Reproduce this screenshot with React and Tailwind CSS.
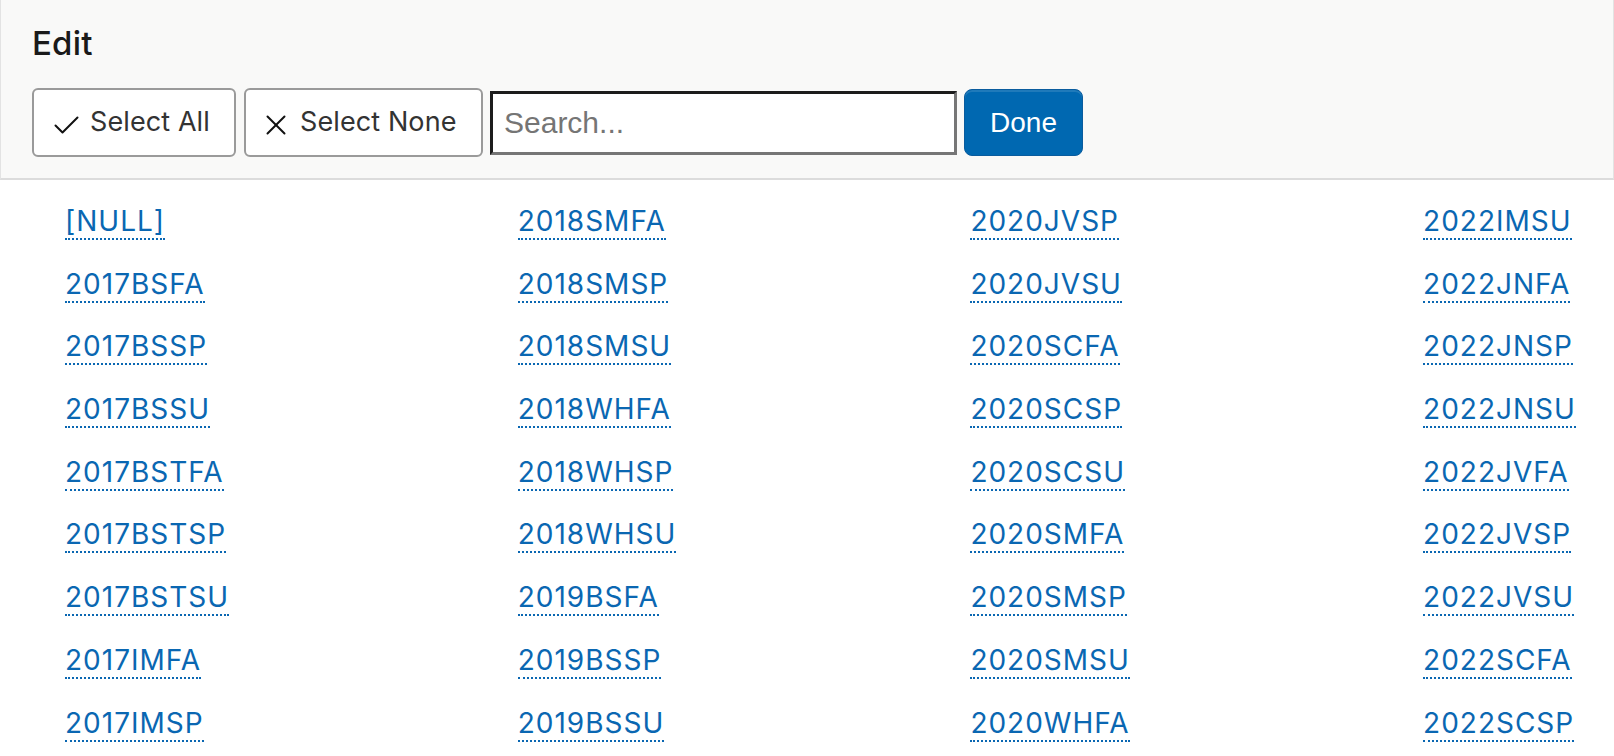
import React from "react";

const columns = [
  ["[NULL]", "2017BSFA", "2017BSSP", "2017BSSU", "2017BSTFA", "2017BSTSP", "2017BSTSU", "2017IMFA", "2017IMSP"],
  ["2018SMFA", "2018SMSP", "2018SMSU", "2018WHFA", "2018WHSP", "2018WHSU", "2019BSFA", "2019BSSP", "2019BSSU"],
  ["2020JVSP", "2020JVSU", "2020SCFA", "2020SCSP", "2020SCSU", "2020SMFA", "2020SMSP", "2020SMSU", "2020WHFA"],
  ["2022IMSU", "2022JNFA", "2022JNSP", "2022JNSU", "2022JVFA", "2022JVSP", "2022JVSU", "2022SCFA", "2022SCSP"],
];

export default function App() {
  return (
    <div className="w-[1614px] h-[756px] overflow-hidden bg-white font-['Inter',sans-serif]">
      <div className="h-[180px] bg-[#f9f9f8] border-b-2 border-[#dcdcdc] border-l border-r border-l-[#e3e3e3] border-r-[#e3e3e3] pl-[31px] pt-[23px]">
        <h1 className="text-[33px] leading-[40px] font-medium text-[#1a1a1a] tracking-[0.2px]">Edit</h1>
        <div className="mt-[25px] flex items-center">
          <button className="h-[69px] w-[204px] flex items-center rounded-[6px] border-2 border-[#9a9a9a] bg-white pl-[20px] text-[27px] text-[#333] tracking-[0.1px]">
            <svg width="25" height="18" viewBox="0 0 25 18" fill="none" stroke="#111" strokeWidth="2" strokeLinecap="round" strokeLinejoin="round" className="mt-[4px]">
              <path d="M1.5 9.5 8.5 16.5 23.5 1.5" />
            </svg>
            <span className="ml-[11px]">Select All</span>
          </button>
          <button className="ml-[8px] h-[69px] w-[239px] flex items-center rounded-[6px] border-2 border-[#9a9a9a] bg-white pl-[20px] text-[27px] text-[#333] tracking-[0.1px]">
            <svg width="20" height="20" viewBox="0 0 20 20" fill="none" stroke="#111" strokeWidth="2" strokeLinecap="round" strokeLinejoin="round" className="mt-[4px]">
              <path d="M1.5 1.5 18.5 18.5" />
              <path d="M18.5 1.5 1.5 18.5" />
            </svg>
            <span className="ml-[14px]">Select None</span>
          </button>
          <input
            placeholder="Search..."
            className="ml-[7px] h-[64px] w-[467px] bg-white border-[3px] border-t-[#1c1c1c] border-l-[#1c1c1c] border-b-[#767676] border-r-[#767676] pl-[11px] text-[30px] font-['Liberation_Sans',sans-serif] text-[#222] placeholder:text-[#757575] outline-none"
          />
          <button className="ml-[7px] h-[67px] w-[119px] rounded-[8px] bg-[#0068b1] border border-[#0a5c9e] text-white text-[28px] font-['Liberation_Sans',sans-serif] shadow-[inset_0_2px_0_rgba(255,255,255,0.12)]">
            Done
          </button>
        </div>
      </div>
      <div className="flex pl-[65px] pt-[24px]">
        {columns.map((col, ci) => (
          <div key={ci} className="w-[452.7px] shrink-0 flex flex-col">
            {col.map((item) => (
              <div key={item} className="h-[62.7px]">
                <span className="inline-block text-[28px] leading-[34px] tracking-[1px] text-[#0a67b2] border-b-2 border-dotted border-[#0a67b2]">
                  {item}
                </span>
              </div>
            ))}
          </div>
        ))}
      </div>
    </div>
  );
}
